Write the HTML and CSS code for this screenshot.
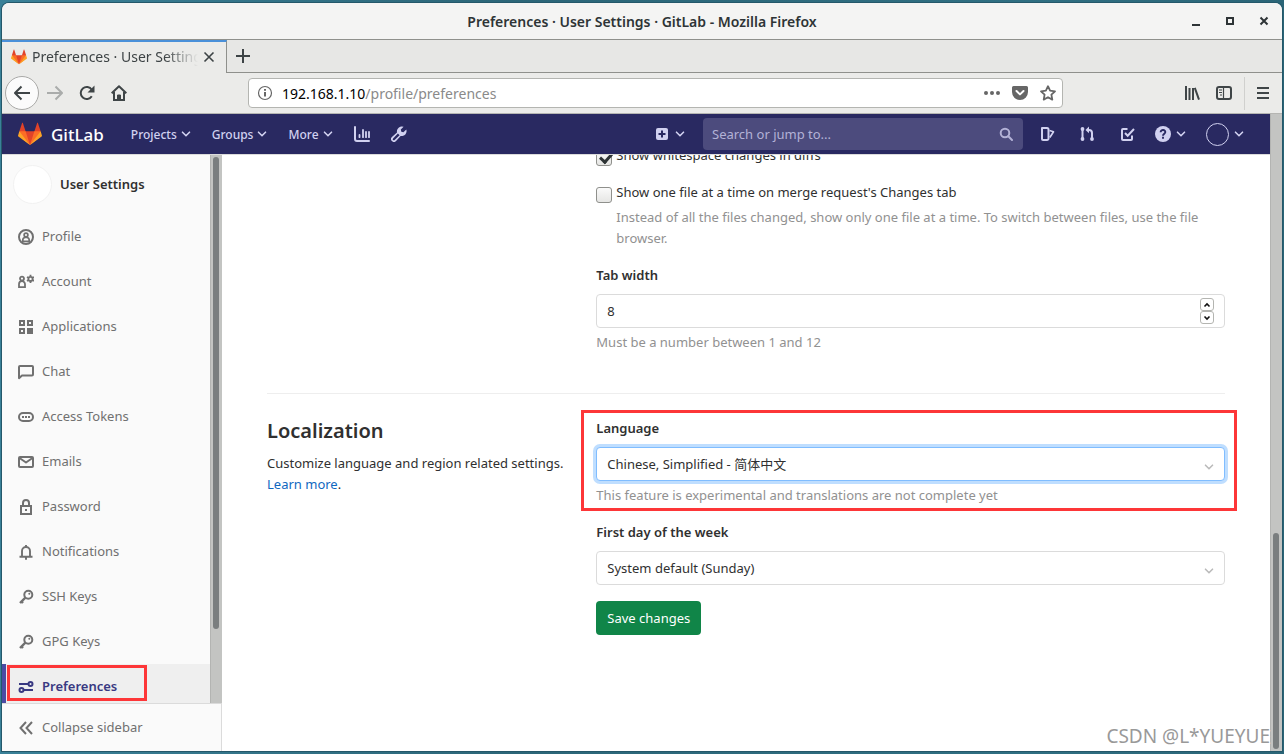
FILE: index.html
```html
<!DOCTYPE html>
<html lang="en">
<head>
<meta charset="utf-8">
<title>Preferences · User Settings · GitLab</title>
<link rel="stylesheet" href="styles.css">
</head>
<body>
<svg class="defs" aria-hidden="true">
  <symbol id="tanuki" viewBox="0 0 36 36">
    <path fill="#e24329" d="M2 14l9.38 9v-9l-4-12.28c-.205-.632-1.176-.632-1.38 0z"/>
    <path fill="#e24329" d="M34 14l-9.38 9v-9l4-12.28c.205-.632 1.176-.632 1.38 0z"/>
    <path fill="#e24329" d="M18 34.38L3 14h30z"/>
    <path fill="#fc6d26" d="M18 34.38L11.38 14H2l4 11z"/>
    <path fill="#fc6d26" d="M18 34.38L24.62 14H34l-4 11z"/>
    <path fill="#fca326" d="M2 14L.1 20.16c-.18.565 0 1.2.5 1.56L18 34.38z"/>
    <path fill="#fca326" d="M34 14l1.9 6.16c.18.565 0 1.2-.5 1.56L18 34.38z"/>
  </symbol>
  <symbol id="chevron" viewBox="0 0 10 10"><path d="M1.5 3.2L5 6.7l3.5-3.5" fill="none" stroke="currentColor" stroke-width="1.6" stroke-linecap="round"/></symbol>
  <symbol id="key" viewBox="0 0 16 16"><circle cx="10.3" cy="5.7" r="4" fill="none" stroke="currentColor" stroke-width="2"/><circle cx="11.3" cy="4.8" r="1" fill="currentColor"/><path d="M7.4 8.6L2 14M3.4 12.4l1.6 1.6" fill="none" stroke="currentColor" stroke-width="2.4"/></symbol>
</svg>
<div class="window">
  <header class="titlebar">
    <span class="title">Preferences · User Settings · GitLab - Mozilla Firefox</span>
    <div class="window-buttons">
      <button aria-label="Minimize"><svg width="12" height="12"><path d="M2 10h8" stroke="currentColor" stroke-width="2"/></svg></button>
      <button aria-label="Maximize"><svg width="12" height="12"><path d="M3 3h6v6H3z" fill="none" stroke="currentColor" stroke-width="2"/></svg></button>
      <button aria-label="Close window"><svg width="12" height="12"><path d="M2.5 2.5l7 7m0-7l-7 7" stroke="currentColor" stroke-width="2"/></svg></button>
    </div>
  </header>
  <div class="tabs">
    <div class="tab">
      <svg class="icon" aria-hidden="true"><use href="#tanuki"/></svg>
      <span class="tab-title">Preferences · User Settings · GitLab</span>
      <button aria-label="Close tab"><svg width="12" height="12"><path d="M1.5 1.5l9 9m0-9l-9 9" stroke="currentColor" stroke-width="1.6"/></svg></button>
    </div>
    <button class="new-tab" aria-label="New tab"><svg width="14" height="14"><path d="M7 0v14M0 7h14" stroke="currentColor" stroke-width="2"/></svg></button>
  </div>
  <div class="toolbar">
    <div class="history">
      <button class="back" aria-label="Back"><svg width="16" height="16" fill="none" stroke="currentColor" stroke-width="2"><path d="M16 8H1.5M7.5 1.5L1 8l6.500 6.500" stroke-linejoin="round"/></svg></button>
      <button class="forward" aria-label="Forward"><svg width="16" height="16" fill="none" stroke="currentColor" stroke-width="2"><path d="M0 8h14.500M8.500 1.500L15 8l-6.500 6.500" stroke-linejoin="round"/></svg></button>
      <button aria-label="Reload"><svg width="16" height="16" fill="none" stroke="currentColor" stroke-width="2"><path d="M12.800 11.200A6 6 0 1 1 12.800 4.800"/><path d="M15.500.5v7h-7z" fill="currentColor" stroke="none"/></svg></button>
      <button aria-label="Home"><svg width="16" height="16" fill="none" stroke="currentColor" stroke-width="2"><path d="M.7 8.300L8 1.200l7.300 7.100" stroke-linejoin="round"/><path d="M3 7v8h10V7"/><path d="M6.500 15v-5h3v5" fill="currentColor" stroke-width="1"/></svg></button>
    </div>
    <div class="urlbar">
      <svg width="16" height="16" fill="none" stroke="#666" aria-hidden="true"><circle cx="8" cy="8" r="6.500" stroke-width="1.200"/><path d="M8 7v4.500M8 4v1.700" stroke-width="2"/></svg>
      <span class="url">192.168.1.10<span class="path">/profile/preferences</span></span>
      <button aria-label="Page actions"><svg width="16" height="16" fill="currentColor"><circle cx="2" cy="8" r="2"/><circle cx="8" cy="8" r="2"/><circle cx="14" cy="8" r="2"/></svg></button>
      <button aria-label="Save to Pocket"><svg width="16" height="16"><path d="M1.500 1h13A1.500 1.500 0 0 1 16 2.500V7a8 8 0 0 1-16 0V2.500A1.500 1.500 0 0 1 1.500 1z" fill="currentColor"/><path d="M4.500 6L8 9.400 11.500 6" fill="none" stroke="#fff" stroke-width="2" stroke-linecap="round" stroke-linejoin="round"/></svg></button>
      <button aria-label="Bookmark"><svg width="16" height="16"><path d="M8 1.200l2.100 4.500 4.900.6-3.600 3.400.9 4.900L8 12.200l-4.300 2.400.9-4.900L1 6.300l4.900-.6z" fill="none" stroke="currentColor" stroke-width="1.800" stroke-linejoin="round"/></svg></button>
    </div>
    <div class="tools">
      <button aria-label="Library"><svg width="16" height="16" fill="none" stroke="currentColor" stroke-width="2"><path d="M2 1v14M5.500 3v12M9 3v12M10.800 2.800L15 14.600"/></svg></button>
      <button aria-label="Sidebars"><svg width="16" height="16" fill="none" stroke="currentColor"><rect x="1" y="2" width="14" height="12" rx="2" stroke-width="2"/><path d="M7.500 2v12M3 5h3M3 7.500h3M4 10h2" stroke-width="1.200"/></svg></button>
      <span class="separator"></span>
      <button aria-label="Open menu"><svg width="12" height="14" stroke="currentColor" stroke-width="2"><path d="M0 2h12M0 7h12M0 12h12"/></svg></button>
    </div>
  </div>

  <div class="viewport">
    <div class="page">
      <nav class="navbar">
        <a class="brand" href="#"><svg width="24" height="24" aria-hidden="true"><use href="#tanuki"/></svg>GitLab</a>
        <button class="menu">Projects<svg class="chev"><use href="#chevron"/></svg></button>
        <button class="menu">Groups<svg class="chev"><use href="#chevron"/></svg></button>
        <button class="menu">More<svg class="chev"><use href="#chevron"/></svg></button>
        <a class="nav-icon" href="#" aria-label="Analytics"><svg width="16" height="16" fill="none" stroke="currentColor" stroke-width="2" stroke-linecap="round"><path d="M1 1v12a2 2 0 0 0 2 2h12"/><path d="M5.500 11.200V9M9 11.200V4M12 11.200V6M15 11.200V6" stroke-width="1.800"/></svg></a>
        <a class="nav-icon" href="#" aria-label="Admin area"><svg width="16" height="16"><path fill-rule="evenodd" fill="currentColor" d="M15.300 3.500L12.400 6.200 10.300 5.700 9.800 3.600 12.600.8A5 5 0 0 0 6 6.400L.9 10.900a2.900 2.900 0 0 0 4.200 4.200l4.500-5.100a5 5 0 0 0 5.700-6.500zM6.900 7.500l1.700 1.700-5 4.700a1 1 0 0 1-1.500-1.500z"/></svg></a>
        <div class="nav-right">
          <button class="menu new" aria-label="New"><svg width="12" height="12"><rect width="12" height="12" rx="2" fill="currentColor"/><path d="M6 2.500v7M2.500 6h7" stroke="#292961" stroke-width="2"/></svg><svg class="chev"><use href="#chevron"/></svg></button>
          <div class="search">
            <input type="text" placeholder="Search or jump to..." aria-label="Search or jump to">
            <svg width="14" height="14" fill="none" stroke="currentColor" stroke-width="2" aria-hidden="true"><circle cx="6" cy="6" r="4.300"/><path d="M9.300 9.300l3.700 3.700" stroke-linecap="round"/></svg>
          </div>
          <div class="nav-icons">
            <a href="#" aria-label="Issues"><svg width="16" height="16" fill="none" stroke="currentColor" stroke-width="2" stroke-linejoin="round"><path d="M3 2h5a1.500 1.500 0 0 1 1.500 1.500v9A1.500 1.500 0 0 1 8 14H4a1 1 0 0 1-1-1z"/><path d="M10.500 4.500l4 1.300-3.700 5.700" stroke-width="1.700"/></svg></a>
            <a href="#" aria-label="Merge requests"><svg width="16" height="16" fill="none" stroke="currentColor" stroke-width="2"><path d="M3.500 3v11M9 4h1a3 3 0 0 1 3 3v7"/><path d="M10 .5L6.500 4 10 7.200z" fill="currentColor" stroke="none"/><g fill="currentColor" stroke="none"><circle cx="3.500" cy="3" r="1.900"/><circle cx="3.500" cy="13" r="1.900"/><circle cx="13" cy="13" r="1.900"/></g></svg></a>
            <a href="#" aria-label="To-Do List"><svg width="16" height="16" fill="none" stroke="currentColor" stroke-width="2"><path d="M8.500 3H4a1 1 0 0 0-1 1v9a1 1 0 0 0 1 1h8a1 1 0 0 0 1-1V9.500"/><path d="M6 7l2.700 2.700L15 3"/></svg></a>
          </div>
          <button class="menu" aria-label="Help"><svg width="16" height="16"><circle cx="8" cy="8" r="8" fill="currentColor"/><path d="M5.600 6.200C5.800 3 10.600 3.500 10.300 6.300 10.200 7.700 8 7.800 8 9.700M8 10.800v1.900" fill="none" stroke="#292961" stroke-width="1.900"/></svg><svg class="chev"><use href="#chevron"/></svg></button>
          <button class="menu" aria-label="User menu"><span class="avatar"></span><svg class="chev"><use href="#chevron"/></svg></button>
        </div>
      </nav>

      <div class="body">
        <aside class="sidebar">
          <div class="side-scroll">
            <div class="side-list">
              <a class="context" href="#"><span class="context-avatar"></span>User Settings</a>
              <a class="item" href="#"><svg class="icon" fill="none" stroke="currentColor" stroke-width="2"><circle cx="8" cy="8" r="7"/><circle cx="8" cy="6" r="1.900" stroke-width="1.700"/><path d="M4.800 12.300v-1.500a2.500 2.500 0 0 1 2.500-2.300h1.400a2.500 2.500 0 0 1 2.500 2.300v1.500z" stroke-width="1.700"/></svg>Profile</a>
              <a class="item" href="#"><svg class="icon" fill="none" stroke="currentColor" stroke-width="1.800"><circle cx="4" cy="4.600" r="2"/><path d="M1 13.200v-3a3 3 0 0 1 6 0v3z"/><circle cx="12.500" cy="4.900" r="2.100"/><path d="M12.500.8v1.800M12.500 7.200V9M9 2.900l1.500.9M14.500 6l1.500.9M9 6.900l1.500-.9M14.500 3.800L16 2.900"/></svg>Account</a>
              <a class="item" href="#"><svg class="icon" fill="none" stroke="currentColor" stroke-width="2"><path d="M2 2h4v4H2zM10 2h4v4h-4zM2 10h4v4H2z"/><path d="M10 10h4v4h-4z" fill="currentColor"/></svg>Applications</a>
              <a class="item" href="#"><svg class="icon" fill="none" stroke="currentColor" stroke-width="2" stroke-linejoin="round"><path d="M1 14.200V3a1 1 0 0 1 1-1h12a1 1 0 0 1 1 1v7.500a1 1 0 0 1-1 1H4z"/></svg>Chat</a>
              <a class="item" href="#"><svg class="icon" fill="none" stroke="currentColor" stroke-width="2"><rect x="1" y="4" width="14" height="8" rx="4"/><path d="M4 8h2M7 8h2M10 8h2"/></svg>Access Tokens</a>
              <a class="item" href="#"><svg class="icon" fill="none" stroke="currentColor" stroke-width="2" stroke-linejoin="round"><rect x="1" y="3" width="14" height="10" rx="1"/><path d="M1.500 4L8 8.500 14.500 4"/></svg>Emails</a>
              <a class="item" href="#"><svg class="icon" fill="none" stroke="currentColor" stroke-width="2"><path d="M3 7h10v8H3z"/><path d="M5 7V4a3 3 0 0 1 6 0v3M8 10v2"/></svg>Password</a>
              <a class="item" href="#"><svg class="icon" fill="none" stroke="currentColor" stroke-width="1.900"><path d="M8 1v2M4 12.500V7a4 4 0 0 1 8 0v5.500M1.500 12.700h13M7 14.700h2"/></svg>Notifications</a>
              <a class="item" href="#"><svg class="icon"><use href="#key"/></svg>SSH Keys</a>
              <a class="item" href="#"><svg class="icon"><use href="#key"/></svg>GPG Keys</a>
              <a class="item active" href="#"><svg class="icon" fill="none" stroke="currentColor" stroke-width="2"><path d="M1 5h9M6 11h9"/><circle cx="12.500" cy="5" r="2"/><circle cx="3.500" cy="11" r="2"/></svg>Preferences<span class="mark"></span></a>
            </div>
            <div class="scrollbar"><div class="thumb"></div></div>
          </div>
          <button class="collapse"><svg class="icon" fill="none" stroke="currentColor" stroke-width="2"><path d="M8 2L2.500 8 8 14M14 2L8.500 8 14 14"/></svg>Collapse sidebar</button>
        </aside>

        <main class="content">
          <section class="row first">
            <div class="col"></div>
            <div class="col">
              <div class="check">
                <input type="checkbox" id="whitespace" checked>
                <label for="whitespace">Show whitespace changes in diffs</label>
              </div>
              <div class="check">
                <input type="checkbox" id="one-file">
                <label for="one-file">Show one file at a time on merge request's Changes tab</label>
                <p class="help">Instead of all the files changed, show only one file at a time. To switch between files, use the file browser.</p>
              </div>
              <div class="group">
                <label class="label" for="tab-width">Tab width</label>
                <div class="control">
                  <input type="number" id="tab-width" min="1" max="12" value="8">
                  <div class="spinner">
                    <button aria-label="Increase"><svg width="8" height="8"><path d="M1.500 5.500L4 3l2.500 2.500" fill="none" stroke="currentColor" stroke-width="1.600"/></svg></button>
                    <button aria-label="Decrease"><svg width="8" height="8"><path d="M1.500 2.500L4 5l2.500-2.500" fill="none" stroke="currentColor" stroke-width="1.600"/></svg></button>
                  </div>
                </div>
                <p class="help">Must be a number between 1 and 12</p>
              </div>
            </div>
          </section>
          <hr>
          <section class="row">
            <div class="col">
              <h4>Localization</h4>
              <p>Customize language and region related settings. <a href="#">Learn more</a>.</p>
            </div>
            <div class="col">
              <div class="group marked">
                <label class="label" for="language">Language</label>
                <div class="control focused">
                  <select id="language"><option>Chinese, Simplified - 简体中文</option></select>
                  <svg class="chev"><use href="#chevron"/></svg>
                </div>
                <p class="help">This feature is experimental and translations are not complete yet</p>
                <span class="mark"></span>
              </div>
              <div class="group">
                <label class="label" for="first-day">First day of the week</label>
                <div class="control">
                  <select id="first-day"><option>System default (Sunday)</option></select>
                  <svg class="chev"><use href="#chevron"/></svg>
                </div>
              </div>
              <button class="save">Save changes</button>
            </div>
          </section>
        </main>
      </div>
    </div>
    <div class="scrollbar page-scroll"><div class="thumb"></div></div>
    <span class="watermark">CSDN @L*YUEYUE</span>
  </div>
</div>
</body>
</html>
```
FILE: styles.css
```css
* { box-sizing: border-box; }
body {
  margin: 0;
  height: 100vh;
  padding: 3px 2px;
  background: linear-gradient(90deg, #3a8198, #2c6678 40%, #2f6f82 80%, #2b6577);
  font-family: "Noto Sans", "Noto Sans CJK SC", sans-serif;
  font-size: 13px;
  line-height: 21px;
  color: #303030;
  overflow: hidden;
}
button, input, select { font: inherit; color: inherit; margin: 0; padding: 0; }
button { border: 0; background: none; display: flex; align-items: center; justify-content: center; }
a { text-decoration: none; color: inherit; }
p { margin: 0; }
svg { display: block; flex: none; }
.defs { position: absolute; width: 0; height: 0; }
.icon { width: 16px; height: 16px; }
.chev { width: 10px; height: 10px; }

.window {
  height: 100%;
  display: flex;
  flex-direction: column;
  border-radius: 7px 7px 0 0;
  overflow: hidden;
  background: #fff;
  box-shadow: 0 0 0 1px #24586a;
}
.titlebar {
  display: flex;
  align-items: center;
  height: 37px;
  padding: 0 12px;
  background: #f4f4f3;
  border-bottom: 1px solid #8f908c;
  color: #2e3436;
}
.title { flex: 1; padding-left: 80px; text-align: center; font-size: 14px; font-weight: 600; }
.window-buttons { display: flex; gap: 22px; }

.tabs { display: flex; height: 33px; background: #e7e7e5; color: #3d4345; }
.tabs::after { content: ""; flex: 1; border-bottom: 1px solid #8f908c; }
.tab {
  display: flex;
  align-items: center;
  gap: 5px;
  width: 225px;
  padding: 0 11px 2px 9px;
  background: #ebebe9;
  border-top: 2px solid #4a90d9;
  border-right: 1px solid #8f908c;
  font-size: 14px;
}
.tab-title {
  flex: 1;
  overflow: hidden;
  white-space: nowrap;
  -webkit-mask-image: linear-gradient(90deg, #000 80%, transparent);
  mask-image: linear-gradient(90deg, #000 80%, transparent);
}
.new-tab { width: 32px; border-bottom: 1px solid #8f908c; }

.toolbar {
  display: flex;
  align-items: center;
  height: 41px;
  padding: 0 13px 0 3px;
  background: #ebebe9;
  border-bottom: 1px solid #b5b5b2;
  color: #3f4547;
}
.history { display: flex; align-items: center; gap: 16px; width: 243px; flex: none; }
.back { width: 34px; height: 34px; border: 1px solid #a9a9a7; border-radius: 50%; background: #fbfbfb; }
.forward { color: #aaacab; margin-left: -8px; }
.urlbar {
  display: flex;
  align-items: center;
  gap: 12px;
  flex: 0 1 815px;
  height: 30px;
  padding: 0 6px 0 8px;
  background: #fff;
  border: 1px solid #b4b5b1;
  border-radius: 4px;
  font-size: 14px;
  color: #666;
}
.url { flex: 1; margin-left: -3px; color: #000; }
.path { color: #8a8a8a; }
.tools { display: flex; align-items: center; gap: 16px; margin-left: auto; color: #3f4547; }
.separator { width: 1px; height: 33px; margin: 0 -4px; background: #d0d0ce; }

.viewport { flex: 1; min-height: 0; display: flex; position: relative; }
.page { flex: 1; min-width: 0; display: flex; flex-direction: column; }
.navbar {
  display: flex;
  align-items: center;
  gap: 21px;
  height: 40px;
  padding: 0 26px 0 16px;
  background: #292961;
  color: #d1d1f0;
  font-size: 12px;
  font-weight: 500;
}
.brand { display: flex; align-items: center; gap: 9px; margin-right: 6px; color: #fff; font-size: 17px; }
.menu { gap: 4px; }
.nav-right { display: flex; align-items: center; gap: 20px; margin-left: auto; }
.nav-right .menu { gap: 5px; }
.nav-right .new { gap: 7px; }
.nav-icons { display: flex; gap: 24px; }
.search {
  display: flex;
  align-items: center;
  width: 320px;
  height: 32px;
  margin: 0 -4px 0 -2px;
  padding: 0 10px 0 9px;
  border-radius: 4px;
  background: #4c4b7d;
  color: #b3b2d6;
}
.search input { flex: 1; min-width: 0; border: 0; background: none; outline: 0; font-size: 13px; font-weight: 400; }
.search input::placeholder { color: #b3b2d6; opacity: 1; }
.avatar { width: 23px; height: 23px; border: 1px solid #d1d1f0; border-radius: 50%; }

.body { flex: 1; min-height: 0; display: flex; border-top: 1px solid #dbdbdb; }
.sidebar { display: flex; flex-direction: column; width: 220px; flex: none; background: #fafafa; border-right: 1px solid #dbdbdb; }
.side-scroll { flex: 1; min-height: 0; display: flex; margin-right: -1px; }
.side-list { flex: 1; overflow: hidden; }
.scrollbar { flex: none; width: 12px; padding: 2px; background: #c3c4c2; border-left: 1px solid #b3b4b2; }
.thumb { width: 6px; height: 472px; border-radius: 3px; background: #7a7e7f; }
.context { display: flex; align-items: center; gap: 8px; height: 59px; padding-left: 11px; font-weight: 600; }
.context-avatar { width: 39px; height: 39px; border: 1px solid #f2f2f2; border-radius: 50%; background: #fff; }
.item { display: flex; align-items: center; gap: 8px; height: 45px; padding-left: 16px; color: #707070; }
.item.active { position: relative; background: #efefef; border-left: 4px solid #4b4ba3; padding-left: 12px; font-weight: 600; color: #393982; }
.mark { position: absolute; border: 3px solid #fd3638; pointer-events: none; }
.item .mark { left: 1px; top: 1px; width: 140px; height: 36px; }
.collapse { flex: none; justify-content: flex-start; gap: 8px; height: 48px; padding-left: 16px; border-top: 1px solid #dbdbdb; color: #707070; }

.content { flex: 1; min-width: 0; overflow: hidden; padding: 0 45px; }
.row { display: grid; grid-template-columns: 1fr 2fr; margin: 0 -15px; }
.first { margin-top: -10px; }
.col { padding: 0 15px; }
.check { position: relative; padding-left: 20px; margin-bottom: 16px; }
.check input {
  -webkit-appearance: none;
  appearance: none;
  position: absolute;
  left: 0;
  top: 5px;
  width: 16px;
  height: 16px;
  border: 1px solid #8f908c;
  border-radius: 3px;
  background: linear-gradient(#fafafa, #e6e6e4);
}
.check input:checked::after {
  content: "";
  position: absolute;
  left: 5px;
  top: 0;
  width: 5px;
  height: 9px;
  border: solid #2e3436;
  border-width: 0 3px 3px 0;
  transform: rotate(42deg);
}
.check .help { margin-top: 4px; }
.help { color: #919191; }
.group { position: relative; margin-bottom: 16px; }
.label { display: block; margin-bottom: 8px; font-weight: 600; }
.control {
  position: relative;
  display: flex;
  align-items: center;
  height: 34px;
  margin-bottom: 4px;
  border: 1px solid #dbdbdb;
  border-radius: 4px;
  background: #fff;
}
.control input, .control select {
  -webkit-appearance: none;
  appearance: none;
  flex: 1;
  min-width: 0;
  height: 32px;
  padding: 0 10px;
  border: 0;
  outline: 0;
  background: none;
}
.control input { -moz-appearance: textfield; appearance: textfield; }
.control input::-webkit-inner-spin-button { -webkit-appearance: none; }
.control .chev { position: absolute; right: 10px; top: 14px; color: #bababa; }
.focused { border-color: #80bdff; box-shadow: 0 0 0 3px #bfdeff; }
.spinner { margin-right: 10px; color: #111; }
.spinner button { width: 14px; height: 13px; border: 1px solid #b4b5b1; border-radius: 3px; }
hr { height: 1px; margin: 24px 0; border: 0; background: #eee; }
h4 { margin: 0 0 9px; font-size: 20px; line-height: 26px; font-weight: 600; }
.col a { color: #1068bf; }
.marked .mark { left: -15px; right: -12px; top: -8px; bottom: -5px; }
.save { height: 34px; padding: 0 11px; border-radius: 4px; background: #108548; color: #fff; }

.page-scroll { display: flex; align-items: flex-end; }
.page-scroll .thumb { height: 216px; }
.watermark { position: absolute; right: 12px; bottom: 3px; font-size: 19px; line-height: 24px; color: #999; text-shadow: 1px 1px 0 #fff; }
```
